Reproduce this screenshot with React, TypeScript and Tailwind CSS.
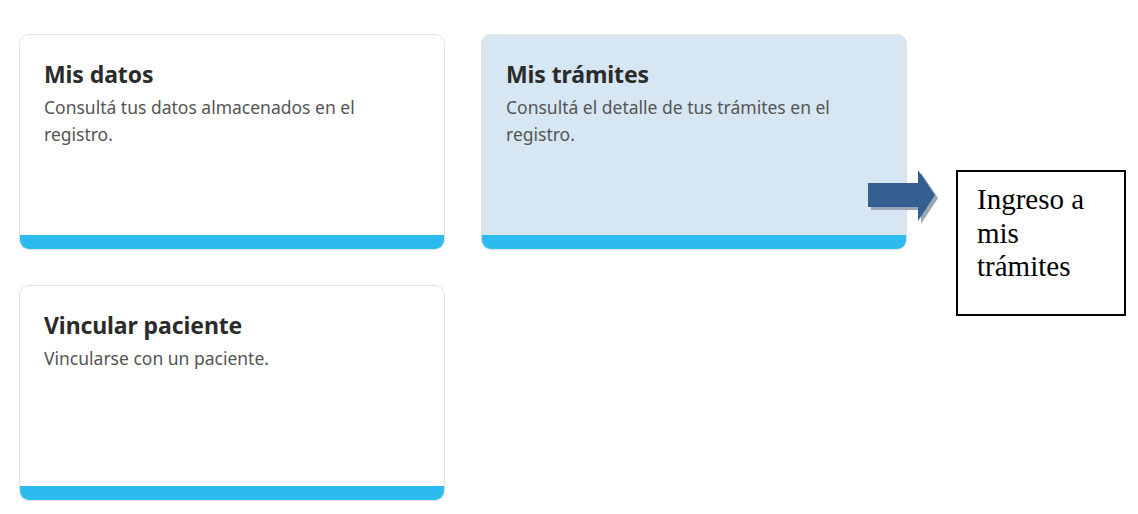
import React from "react";

type CardProps = { title: string; text: React.ReactNode; active?: boolean };

function Card({ title, text, active = false }: CardProps) {
  return (
    <div
      className={`flex h-[216px] flex-col overflow-hidden rounded-[10px] border border-[#e2e2e2] ${
        active ? "bg-[#d6e6f2]" : "bg-white"
      }`}
    >
      <div className="flex-1 px-[24px] pt-[25px]">
        <h2 className="text-[23px] leading-[28px] font-bold text-[#2b2b2b] tracking-[-0.1px]">{title}</h2>
        <p className="mt-[6px] text-[17.5px] leading-[27px] text-[#555]">{text}</p>
      </div>
      <div className="h-[14px] bg-[#2bbbef]" />
    </div>
  );
}

export default function App() {
  return (
    <div className="relative h-[514px] w-[1138px] bg-white [font-family:'Noto_Sans',sans-serif]">
      <div className="grid w-[907px] grid-cols-2 gap-x-[36px] gap-y-[35px] pl-[19px] pt-[34px]">
        <Card title="Mis datos" text={<>Consultá tus datos almacenados en el<br />registro.</>} />
        <Card title="Mis trámites" text={<>Consultá el detalle de tus trámites en el<br />registro.</>} active />
        <Card title="Vincular paciente" text="Vincularse con un paciente." />
      </div>

      {/* annotation arrow */}
      <svg className="absolute left-[866px] top-[168px]" width="76" height="62" viewBox="0 0 76 62">
        <polygon points="5,18 55,18 55,5 72,30 55,56 55,42 5,42" fill="#9aa6b6" />
        <polygon points="2,15 52,15 52,2 69,27 52,53 52,39 2,39" fill="#365f91" />
      </svg>

      {/* annotation box */}
      <div className="absolute left-[956px] top-[170px] h-[146px] w-[170px] border-2 border-black bg-white pl-[19px] pt-[11px] text-[29px] leading-[33.5px] text-black [font-family:'Liberation_Serif',serif]">
        Ingreso a
        <br />
        mis
        <br />
        trámites
      </div>
    </div>
  );
}
